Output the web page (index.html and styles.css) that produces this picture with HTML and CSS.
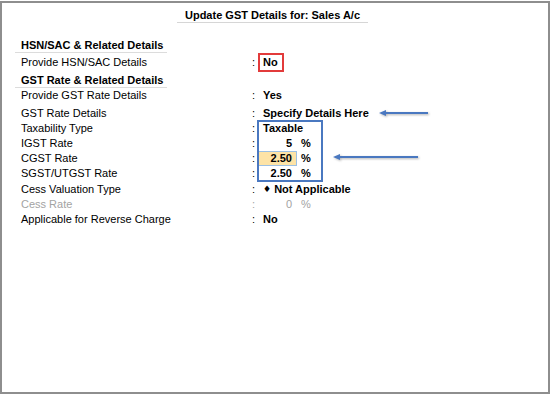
FILE: index.html
```html
<!DOCTYPE html>
<html lang="en">
<head>
    <meta charset="UTF-8">
    <meta name="viewport" content="width=device-width, initial-scale=1.0">
    <title>Update GST Details</title>
    <link rel="stylesheet" href="styles.css">
</head>
<body>
    <div class="frame">
        <div class="title-wrap">
            <h1 class="title">Update GST Details for: Sales A/c</h1>
        </div>

        <!-- HSN section -->
        <h2 class="group first">HSN/SAC &amp; Related Details</h2>
        <div class="row tall">
            <span class="label">Provide HSN/SAC Details</span>
            <span class="colon">:</span>
            <span class="value"><b class="red-box">No</b></span>
        </div>

        <!-- GST rate section -->
        <h2 class="group">GST Rate &amp; Related Details</h2>
        <div class="row">
            <span class="label">Provide GST Rate Details</span>
            <span class="colon">:</span>
            <span class="value"><b class="txt">Yes</b></span>
        </div>
        <div class="row gap">
            <span class="label">GST Rate Details</span>
            <span class="colon">:</span>
            <span class="value"><b class="txt">Specify Details Here</b></span>
        </div>
        <div class="row">
            <span class="label">Taxability Type</span>
            <span class="colon">:</span>
            <span class="value"><b class="txt">Taxable</b></span>
        </div>
        <div class="row">
            <span class="label">IGST Rate</span>
            <span class="colon">:</span>
            <span class="value"><b class="num">5</b><b class="pct">%</b></span>
        </div>
        <div class="row">
            <span class="label">CGST Rate</span>
            <span class="colon">:</span>
            <span class="value"><b class="num active">2.50</b><b class="pct">%</b></span>
        </div>
        <div class="row">
            <span class="label">SGST/UTGST Rate</span>
            <span class="colon">:</span>
            <span class="value"><b class="num">2.50</b><b class="pct">%</b></span>
        </div>
        <div class="row small-gap">
            <span class="label">Cess Valuation Type</span>
            <span class="colon">:</span>
            <span class="value"><b class="txt"><span class="diamond">♦</span> Not Applicable</b></span>
        </div>
        <div class="row muted">
            <span class="label">Cess Rate</span>
            <span class="colon">:</span>
            <span class="value"><span class="num">0</span><span class="pct">%</span></span>
        </div>
        <div class="row">
            <span class="label">Applicable for Reverse Charge</span>
            <span class="colon">:</span>
            <span class="value"><b class="txt">No</b></span>
        </div>

        <!-- callouts drawn over the form -->
        <div class="blue-box"></div>
        <svg class="arrow arrow-one" width="52" height="10" viewBox="0 0 52 10">
            <line x1="6" y1="5" x2="50" y2="5" stroke="#4a78c0" stroke-width="2"/>
            <path d="M1 5 L8 2 L8 8 Z" fill="#4a78c0"/>
        </svg>
        <svg class="arrow arrow-two" width="88" height="10" viewBox="0 0 88 10">
            <line x1="6" y1="5" x2="86" y2="5" stroke="#4a78c0" stroke-width="2"/>
            <path d="M1 5 L8 2 L8 8 Z" fill="#4a78c0"/>
        </svg>
    </div>
</body>
</html>
```

FILE: styles.css
```css
body {
    margin: 0;
    padding: 0;
    background: white;
    font-family: "Liberation Sans", Arial, sans-serif;
    font-size: 11px;
    color: #000;
}

.frame {
    position: relative;
    box-sizing: border-box;
    margin-top: 1px;
    height: 393px;
    border: 2px solid #8e8e8e;
    padding-left: 19px;
}

.title-wrap {
    text-align: center;
    padding-top: 5px;
    padding-right: 24px;
}

.title {
    display: inline-block;
    margin: 0;
    padding: 0 8px;
    font-size: 11px;
    line-height: 14px;
    border-bottom: 1px solid #d6d6d6;
}

.group {
    display: inline-block;
    margin: 1px 0 0 -6px;
    padding: 0 4px 0 6px;
    font-size: 11px;
    line-height: 14px;
    border-bottom: 1px solid #dcdcdc;
}

.group.first {
    margin-top: 15px;
}

.row {
    display: flex;
    height: 15px;
    line-height: 15px;
}

.row.tall {
    height: 19px;
    line-height: 19px;
}

.row.gap {
    margin-top: 3px;
}

.row.small-gap {
    margin-top: 1px;
}

.label {
    width: 231px;
}

.colon {
    width: 6px;
}

.value {
    display: flex;
    align-items: center;
}

.txt {
    padding-left: 5px;
}

.red-box {
    display: inline-block;
    padding: 0 4px 0 3px;
    line-height: 15px;
    border: 2px solid #e23b3b;
}

.num {
    display: inline-block;
    box-sizing: border-box;
    width: 39px;
    padding-right: 4px;
    text-align: right;
    line-height: 13px;
    border: 1px solid transparent;
}

.num.active {
    background: #fde3a6;
    border-color: #9cc0e4;
}

.pct {
    margin-left: 4px;
}

.diamond {
    font-family: "DejaVu Sans", sans-serif;
    font-size: 9px;
    vertical-align: 1px;
}

.muted {
    color: #a3a3a3;
}

.blue-box {
    position: absolute;
    left: 255px;
    top: 117px;
    width: 66px;
    height: 62px;
    box-sizing: border-box;
    border: 2px solid #4a78c0;
}

.arrow {
    position: absolute;
    filter: drop-shadow(1px 1px 1px rgba(0, 0, 0, 0.3));
}

.arrow-one {
    left: 376px;
    top: 105px;
}

.arrow-two {
    left: 330px;
    top: 149px;
}
```
